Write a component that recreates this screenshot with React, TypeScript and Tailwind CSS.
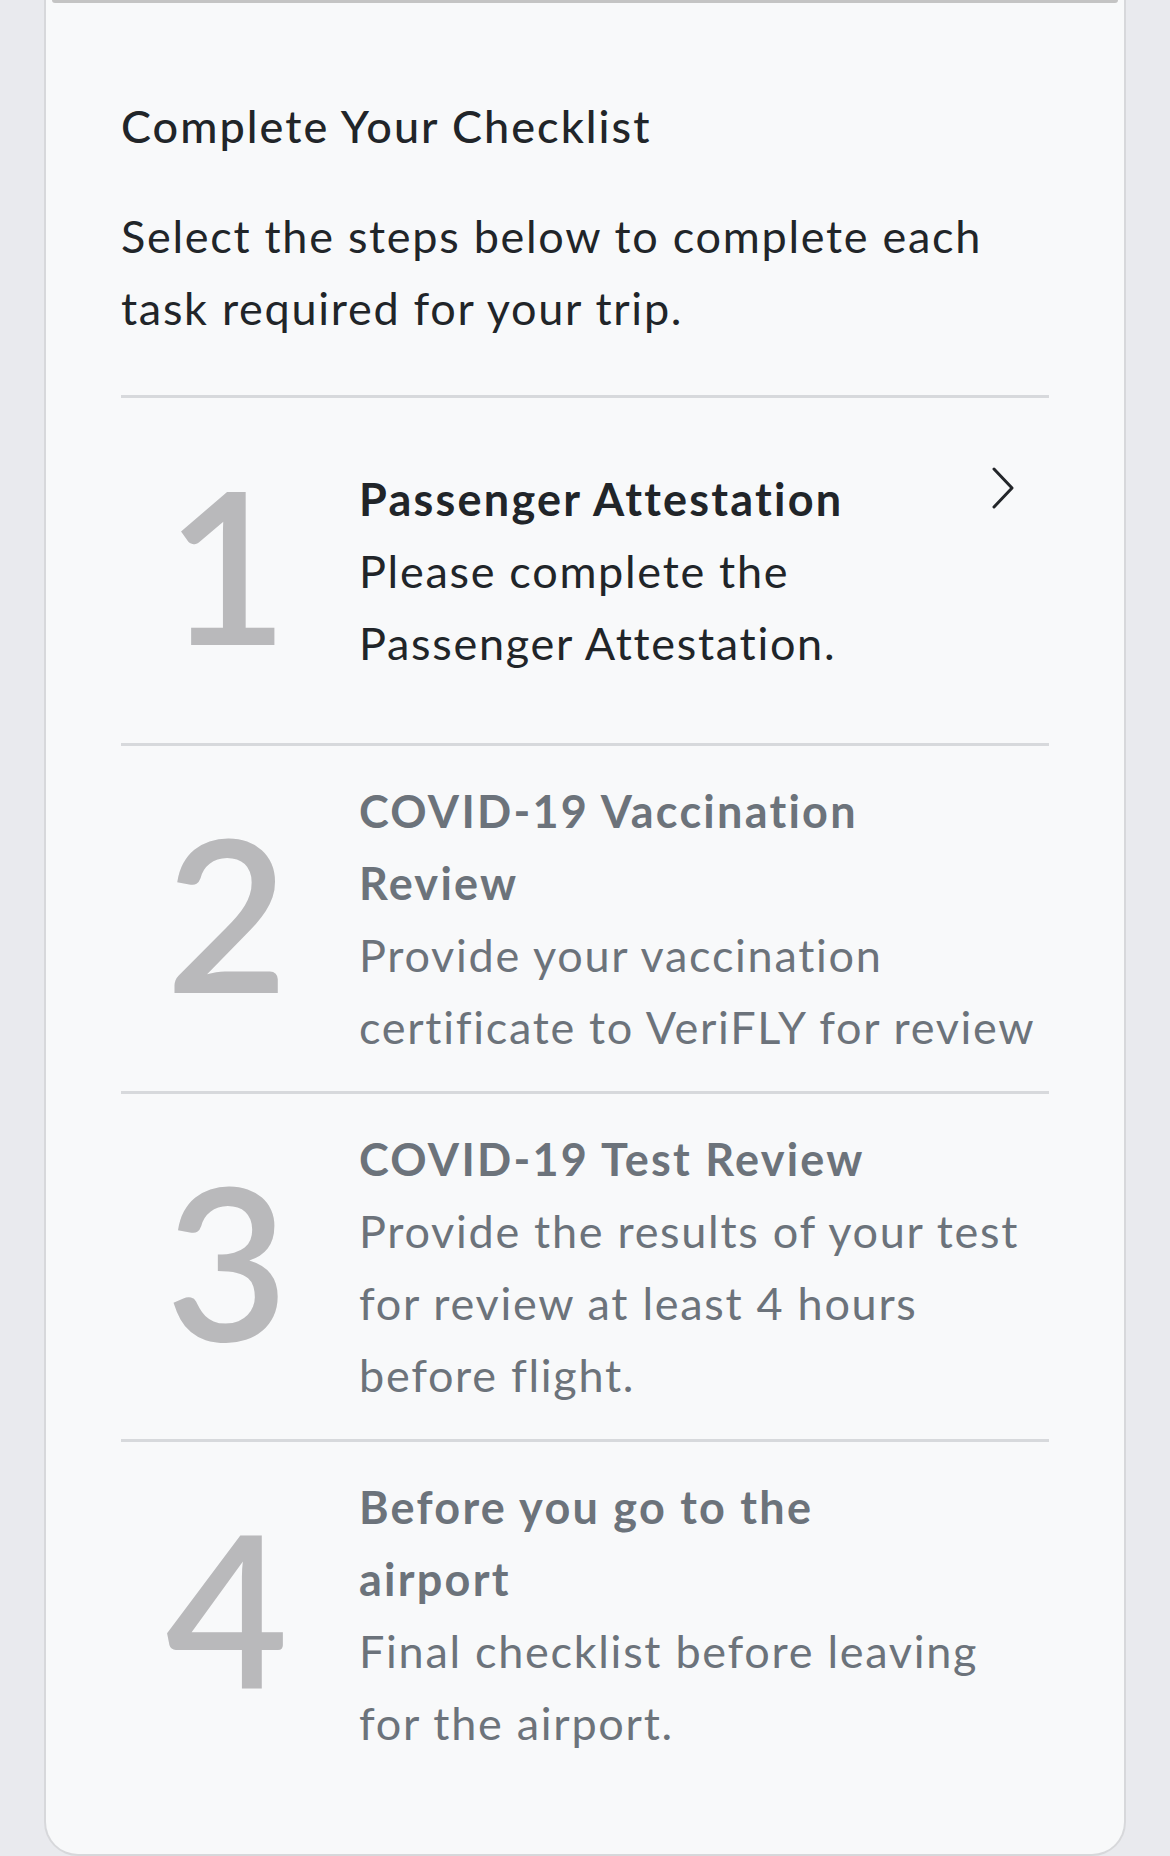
import React from "react";

const steps = [
  {
    n: "1",
    title: "Passenger Attestation",
    desc: "Please complete the Passenger Attestation.",
    active: true,
  },
  {
    n: "2",
    title: "COVID-19 Vaccination Review",
    desc: "Provide your vaccination certificate to VeriFLY for review",
    active: false,
  },
  {
    n: "3",
    title: "COVID-19 Test Review",
    desc: "Provide the results of your test for review at least 4 hours before flight.",
    active: false,
  },
  {
    n: "4",
    title: "Before you go to the airport",
    desc: "Final checklist before leaving for the airport.",
    active: false,
  },
];

function Chevron() {
  return (
    <svg viewBox="0 0 22 42" className="h-[42px] w-[22px]" aria-hidden="true">
      <path
        d="M2 2 L20 21 L2 40"
        fill="none"
        stroke="#23262a"
        strokeWidth="3"
        strokeLinecap="round"
        strokeLinejoin="round"
      />
    </svg>
  );
}

export default function App() {
  return (
    <div className="h-[1856px] overflow-hidden bg-[#e9eaee] px-[44px] font-['Lato',_'Liberation_Sans',_sans-serif]">
      <div className="flex min-h-[1856px] flex-col rounded-b-[34px] border-x-2 border-b-2 border-[#d7d8db] bg-[#f8f9fa]">
        {/* bottom edge of the header above */}
        <div className="mx-[6px] h-[3px] rounded-b-full bg-[#c4c4c4]" />

        <div className="px-[75px] pt-[97px] pb-[60px]">
          <h2 className="text-[45px] leading-[52px] font-medium tracking-[0.045em] text-[#212529]">
            Complete Your Checklist
          </h2>
          <p className="mt-[48px] text-[45px] leading-[72px] tracking-[0.038em] text-[#212529]">
            Select the steps below to complete each task required for your trip.
          </p>

          <div className="mt-[51px]">
            {steps.map((s) => (
              <div key={s.n}>
                <div className="h-[3px] bg-[#d7d9dc]" />
                <div className="flex min-h-[345px] items-center py-[26px]">
                  <div className="mb-[16px] w-[212px] shrink-0 text-center text-[212px] leading-none font-semibold text-[#b9b9bb]">
                    {s.n}
                  </div>
                  <div
                    className={
                      "ml-[26px] w-[683px] " +
                      (s.active ? "text-[#212529]" : "text-[#6c737b]")
                    }
                  >
                    <div className="flex items-start">
                      <div className="flex-1">
                        <h3 className="text-[45px] leading-[72px] font-bold tracking-[0.05em]">
                          {s.title}
                        </h3>
                        {s.active && (
                          <p className="text-[45px] leading-[72px] tracking-[0.038em]">
                            {s.desc}
                          </p>
                        )}
                      </div>
                      <div className="flex w-[83px] shrink-0 pt-[4px] pl-[33px]">
                        {s.active && <Chevron />}
                      </div>
                    </div>
                    {!s.active && (
                      <p className="text-[45px] leading-[72px] tracking-[0.038em]">
                        {s.desc}
                      </p>
                    )}
                  </div>
                </div>
              </div>
            ))}
          </div>
        </div>
      </div>
    </div>
  );
}
